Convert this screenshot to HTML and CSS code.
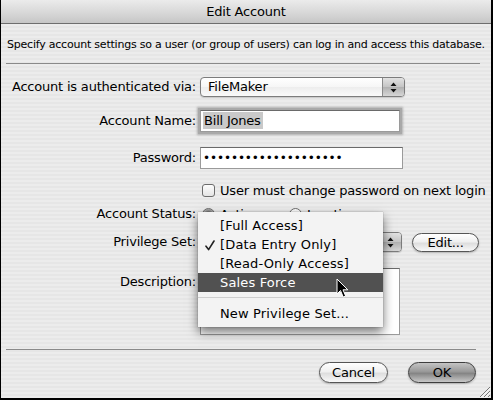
FILE: index.html
```html
<!DOCTYPE html>
<html>
<head>
<meta charset="utf-8">
<link rel="stylesheet" href="styles.css">
</head>
<body>
<div class="window">
  <div class="titlebar">Edit Account</div>
  <p class="intro">Specify account settings so a user (or group of users) can log in and access this database.</p>
  <div class="sep sep-top"></div>
  <div class="form">
    <div class="label">Account is authenticated via:</div>
    <div class="ctl">
      <div class="popup auth"><span class="popup-text">FileMaker</span><span class="arrows"><svg width="7" height="11" viewBox="0 0 7 11"><path d="M3.5 0.5 L6.5 4 L0.5 4 Z M0.5 7 L6.5 7 L3.5 10.5 Z" fill="#111"/></svg></span></div>
    </div>

    <div class="label">Account Name:</div>
    <div class="ctl">
      <div class="field focus"><span class="sel">Bill Jones</span></div>
    </div>

    <div class="label">Password:</div>
    <div class="ctl">
      <div class="field pw">••••••••••••••••••••</div>
    </div>

    <div class="label"></div>
    <div class="ctl">
      <div class="check"><span class="box"></span><span>User must change password on next login</span></div>
    </div>

    <div class="label">Account Status:</div>
    <div class="ctl radios">
      <span class="radio on"></span><span class="rlabel">Active</span>
      <span class="radio"></span><span class="rlabel">Inactive</span>
    </div>

    <div class="label">Privilege Set:</div>
    <div class="ctl">
      <div class="popup priv"><span class="popup-text"></span><span class="arrows"><svg width="7" height="11" viewBox="0 0 7 11"><path d="M3.5 0.5 L6.5 4 L0.5 4 Z M0.5 7 L6.5 7 L3.5 10.5 Z" fill="#111"/></svg></span></div>
      <div class="btn edit">Edit...</div>
    </div>

    <div class="label top">Description:</div>
    <div class="ctl bottom">
      <div class="textarea"></div>
    </div>
  </div>
  <div class="sep sep-bottom"></div>
  <div class="buttons">
    <div class="btn cancel">Cancel</div>
    <div class="btn default">OK</div>
  </div>

  <div class="menu">
    <div class="item">[Full Access]</div>
    <div class="item checked"><svg class="tick" width="10" height="11" viewBox="0 0 10 11"><path d="M1 6.2 L3.6 9.6 L9 1" fill="none" stroke="#222" stroke-width="1.6" stroke-linecap="round" stroke-linejoin="round"/></svg>[Data Entry Only]</div>
    <div class="item">[Read-Only Access]</div>
    <div class="item hl">Sales Force</div>
    <div class="menu-sep"></div>
    <div class="item">New Privilege Set...</div>
  </div>

  <svg class="cursor" width="13" height="21" viewBox="0 0 13 21"><path d="M1 1 L1 16 L4.5 12.5 L7.2 19 L9.6 18 L7 11.8 L11.8 11.8 Z" fill="#000" stroke="#fff" stroke-width="1" stroke-linejoin="round"/></svg>

  <svg class="grip" width="13" height="13" viewBox="0 0 13 13"><path d="M12 2 L2 12 M12 6 L6 12 M12 10 L10 12" stroke="#777" stroke-width="1"/><path d="M12.5 3 L3 12.5 M12.5 7 L7 12.5" stroke="#fff" stroke-width="0.8"/></svg>
</div>
</body>
</html>
```
FILE: styles.css
```css
html, body {
  margin: 0;
  padding: 0;
  background: #000;
}
.window {
  position: relative;
  width: 493px;
  height: 400px;
  box-sizing: border-box;
  border-left: 1px solid #000;
  border-right: 2px solid #000;
  border-bottom: 2px solid #000;
  background: repeating-linear-gradient(to bottom, #ececec 0px, #ececec 2px, #e6e6e6 2px, #e6e6e6 4px);
  font-family: "DejaVu Sans", sans-serif;
  font-size: 13px;
  letter-spacing: -0.2px;
  color: #000;
  overflow: hidden;
}
.titlebar {
  height: 23px;
  line-height: 23px;
  text-align: center;
  border-bottom: 1px solid #6e6e6e;
  background: linear-gradient(to bottom, #ebebeb, #d6d6d6 60%, #c6c6c6);
  border-top-left-radius: 4px;
  border-top-right-radius: 4px;
}
.intro {
  margin: 14px 0 0 6px;
  font-size: 11px;
  letter-spacing: -0.22px;
  line-height: 14px;
  white-space: nowrap;
}
.sep {
  height: 1px;
  background: #8a8a8a;
}
.sep-top {
  margin: 11px 11px 0 5px;
}
.sep-bottom {
  margin: 5px 15px 0 5px;
}
.form {
  margin-top: 7px;
  display: grid;
  grid-template-columns: 195px 1fr;
  grid-template-rows: 32px 36px 38px 26px 22px 34px 85px;
  column-gap: 4px;
  align-items: center;
}
.label {
  text-align: right;
  line-height: 16px;
  white-space: nowrap;
}
.label.top {
  align-self: start;
  padding-top: 15px;
}
.ctl {
  display: flex;
  align-items: center;
}
.ctl.bottom {
  align-self: end;
  margin-bottom: 9px;
}
.popup {
  display: flex;
  align-items: stretch;
  height: 20px;
  box-sizing: border-box;
  border: 1px solid #7c7c7c;
  border-radius: 4px;
  background: linear-gradient(to bottom, #ffffff, #f6f6f6 50%, #ededed 51%, #fafafa);
  box-shadow: 0 1px 1px rgba(0,0,0,0.15);
  overflow: hidden;
}
.popup.auth {
  width: 205px;
}
.popup.priv {
  width: 202px;
}
.popup-text {
  flex: 1;
  padding-left: 7px;
  line-height: 18px;
}
.arrows {
  width: 21px;
  border-left: 1px solid #8a8a8a;
  background: linear-gradient(to bottom, #e2e2e2, #c4c4c4 50%, #b0b0b0 51%, #d6d6d6);
  display: flex;
  align-items: center;
  justify-content: center;
}
.field {
  width: 203px;
  height: 22px;
  box-sizing: border-box;
  border: 1px solid #9a9a9a;
  border-top-color: #6a6a6a;
  background: #fff;
  line-height: 20px;
  padding-left: 2px;
  white-space: nowrap;
  overflow: hidden;
}
.field.focus {
  width: 200px;
  box-shadow: 0 0 0 2px #a9a9a9, 0 0 2px 3px rgba(120,120,120,0.5);
}
.sel {
  background: #c9c9c9;
  padding: 1px 2px 1px 1px;
}
.field.pw {
  font-size: 12px;
  letter-spacing: -0.1px;
  padding-left: 2px;
}
.check {
  display: flex;
  align-items: center;
  margin-left: 2px;
  white-space: nowrap;
}
.box {
  width: 13px;
  height: 13px;
  box-sizing: border-box;
  border: 1px solid #6c6c6c;
  border-radius: 3px;
  background: linear-gradient(to bottom, #fdfdfd, #e4e4e4);
  margin-right: 5px;
}
.radios {
  white-space: nowrap;
}
.radio {
  width: 13px;
  height: 13px;
  box-sizing: border-box;
  border: 1px solid #6c6c6c;
  border-radius: 50%;
  background: linear-gradient(to bottom, #fdfdfd, #e4e4e4);
  margin: 0 5px 0 2px;
}
.radio.on {
  background: radial-gradient(circle at 50% 50%, #111 0, #111 2px, #7a7a7a 3px, #b8b8b8 6px);
}
.rlabel {
  margin-right: 28px;
}
.btn {
  height: 19px;
  box-sizing: border-box;
  border: 1px solid #555;
  border-radius: 10px;
  background: linear-gradient(to bottom, #ffffff, #f0f0f0 45%, #dedede 55%, #f8f8f8);
  box-shadow: 0 1px 2px rgba(0,0,0,0.25);
  text-align: center;
  line-height: 17px;
}
.btn.edit {
  width: 67px;
  margin-left: 10px;
}
.buttons {
  display: flex;
  justify-content: flex-end;
  gap: 20px;
  margin-top: 12px;
  padding-right: 15px;
}
.buttons .btn {
  height: 21px;
  line-height: 19px;
  border-radius: 11px;
}
.btn.cancel {
  width: 69px;
}
.btn.default {
  width: 68px;
  border-color: #3e3e3e;
  background: linear-gradient(to bottom, #c4c4c4, #999 45%, #858585 55%, #c8c8c8);
}
.textarea {
  width: 200px;
  height: 67px;
  box-sizing: border-box;
  border: 1px solid #9a9a9a;
  border-top-color: #6a6a6a;
  background: #fff;
}
.menu {
  position: absolute;
  left: 197px;
  top: 212px;
  width: 185px;
  padding: 4px 0;
  background: #f3f3f3;
  letter-spacing: 0.15px;
  box-shadow: 0 5px 10px rgba(0,0,0,0.55), 0 0 1px rgba(0,0,0,0.4);
}
.item {
  position: relative;
  height: 19px;
  line-height: 19px;
  padding-left: 22px;
  white-space: nowrap;
}
.item.hl {
  background: #515151;
  color: #fff;
}
.tick {
  position: absolute;
  left: 7px;
  top: 5px;
}
.menu-sep {
  height: 1px;
  background: #cfcfcf;
  margin: 5px 0 6px;
}
.cursor {
  position: absolute;
  left: 335px;
  top: 278px;
}
.grip {
  position: absolute;
  right: 0;
  bottom: 0;
}
```
